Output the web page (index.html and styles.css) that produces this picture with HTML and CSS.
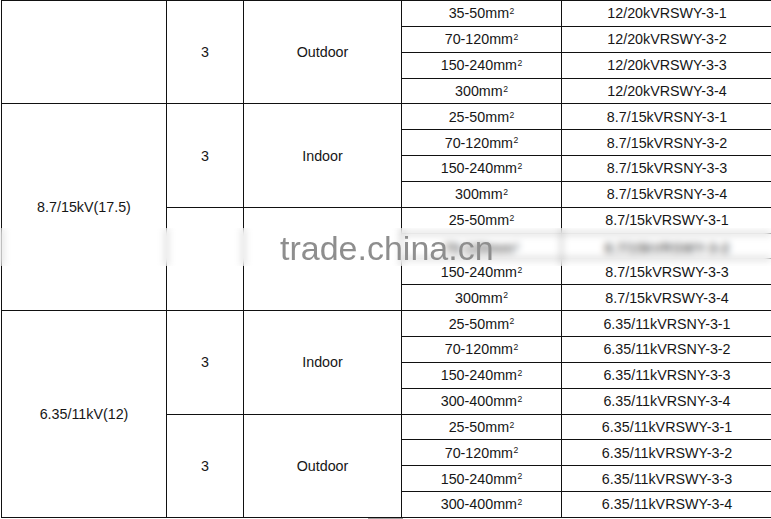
FILE: index.html
```html
<!DOCTYPE html>
<html lang="en">
<head>
<meta charset="utf-8">
<title>Cable termination specification</title>
<link rel="stylesheet" href="styles.css">
</head>
<body>
<div class="page">
  <table class="spec">
    <colgroup>
      <col class="c-volt"><col class="c-core"><col class="c-use"><col class="c-size"><col class="c-model">
    </colgroup>
    <tbody>
      <tr><td rowspan="4"></td><td rowspan="4">3</td><td rowspan="4">Outdoor</td><td>35-50mm<sup>2</sup></td><td>12/20kVRSWY-3-1</td></tr>
      <tr><td>70-120mm<sup>2</sup></td><td>12/20kVRSWY-3-2</td></tr>
      <tr><td>150-240mm<sup>2</sup></td><td>12/20kVRSWY-3-3</td></tr>
      <tr><td>300mm<sup>2</sup></td><td>12/20kVRSWY-3-4</td></tr>

      <tr><td rowspan="8">8.7/15kV(17.5)</td><td rowspan="4">3</td><td rowspan="4">Indoor</td><td>25-50mm<sup>2</sup></td><td>8.7/15kVRSNY-3-1</td></tr>
      <tr><td>70-120mm<sup>2</sup></td><td>8.7/15kVRSNY-3-2</td></tr>
      <tr><td>150-240mm<sup>2</sup></td><td>8.7/15kVRSNY-3-3</td></tr>
      <tr><td>300mm<sup>2</sup></td><td>8.7/15kVRSNY-3-4</td></tr>

      <tr><td rowspan="4"></td><td rowspan="4"></td><td>25-50mm<sup>2</sup></td><td>8.7/15kVRSWY-3-1</td></tr>
      <tr class="hidden-row"><td>70-120mm<sup>2</sup></td><td>8.7/15kVRSWY-3-2</td></tr>
      <tr><td>150-240mm<sup>2</sup></td><td>8.7/15kVRSWY-3-3</td></tr>
      <tr><td>300mm<sup>2</sup></td><td>8.7/15kVRSWY-3-4</td></tr>

      <tr><td rowspan="8">6.35/11kV(12)</td><td rowspan="4">3</td><td rowspan="4">Indoor</td><td>25-50mm<sup>2</sup></td><td>6.35/11kVRSNY-3-1</td></tr>
      <tr><td>70-120mm<sup>2</sup></td><td>6.35/11kVRSNY-3-2</td></tr>
      <tr><td>150-240mm<sup>2</sup></td><td>6.35/11kVRSNY-3-3</td></tr>
      <tr><td>300-400mm<sup>2</sup></td><td>6.35/11kVRSNY-3-4</td></tr>

      <tr><td rowspan="4">3</td><td rowspan="4">Outdoor</td><td>25-50mm<sup>2</sup></td><td>6.35/11kVRSWY-3-1</td></tr>
      <tr><td>70-120mm<sup>2</sup></td><td>6.35/11kVRSWY-3-2</td></tr>
      <tr><td>150-240mm<sup>2</sup></td><td>6.35/11kVRSWY-3-3</td></tr>
      <tr><td>300-400mm<sup>2</sup></td><td>6.35/11kVRSWY-3-4</td></tr>
    </tbody>
  </table>
  <div class="tab-edge"></div>
  <div class="watermark"><span class="wm-text">trade.china.cn</span></div>
</div>
</body>
</html>
```

FILE: styles.css
```css
html, body {
  margin: 0;
  padding: 0;
  background: #ffffff;
}

body {
  width: 771px;
  height: 519px;
  overflow: hidden;
}

.page {
  position: relative;
  width: 771px;
  height: 519px;
  overflow: hidden;
}

.spec {
  border-collapse: collapse;
  table-layout: fixed;
  width: 771px;
  margin-left: 1px;
  font-family: "Liberation Sans", Arial, sans-serif;
  font-size: 14.3px;
  color: #161616;
}

.c-volt { width: 165px; }
.c-core { width: 77px; }
.c-use { width: 158px; }
.c-size { width: 160px; }
.c-model { width: 211px; }

.spec tr {
  height: 25.85px;
}

.spec td {
  border: 1px solid #111111;
  padding: 0;
  text-align: center;
  vertical-align: middle;
  line-height: 16px;
  white-space: nowrap;
}

.spec .hidden-row td {
  color: #000000;
  font-weight: bold;
  padding-top: 5px;
  line-height: 11px;
}

.spec sup {
  font-size: 0.6em;
  line-height: 0;
  vertical-align: 0.5em;
  margin-left: 0.5px;
}

.tab-edge {
  margin-left: 368px;
  width: 35px;
  height: 2px;
  background: #9c9c9c;
}

.watermark {
  position: absolute;
  left: 0;
  top: 228px;
  width: 771px;
  height: 38px;
  display: flex;
  align-items: flex-start;
  padding-left: 280px;
  padding-top: 7px;
  box-sizing: border-box;
  background: rgba(255, 255, 255, 0.4);
  backdrop-filter: blur(3.5px);
  -webkit-backdrop-filter: blur(3.5px);
}

.wm-text {
  font-family: "Liberation Sans", Arial, sans-serif;
  font-size: 34px;
  line-height: 26px;
  color: #8e8e8e;
}
```
